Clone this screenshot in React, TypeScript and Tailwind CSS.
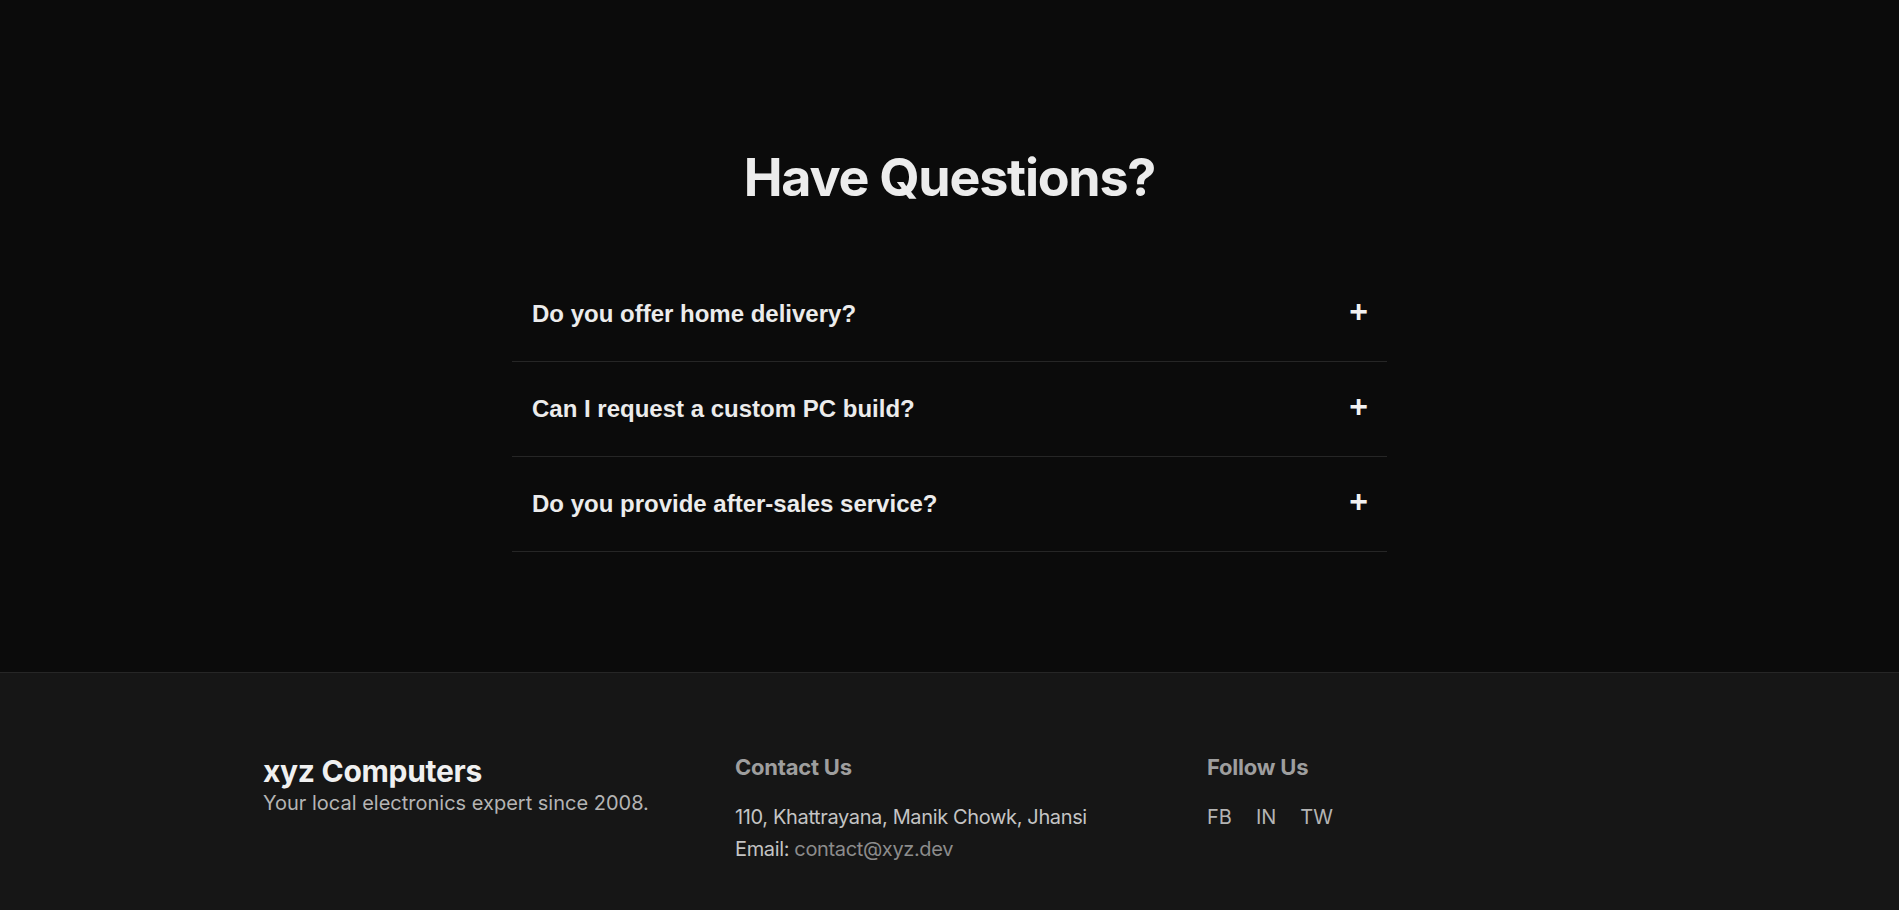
const faqs = [
  "Do you offer home delivery?",
  "Can I request a custom PC build?",
  "Do you provide after-sales service?",
]

export default function App() {
  return (
    <div className="min-h-screen bg-[#0b0b0b] font-['Inter',sans-serif]">
      <section className="pt-[152px] pb-[120px]">
        <h2 className="text-center text-[52px] leading-none font-bold text-[#ececec] tracking-[-0.024em]">
          Have Questions?
        </h2>
        <div className="mx-auto mt-[63px] w-[875px]">
          {faqs.map((q) => (
            <FaqRow key={q} question={q} />
          ))}
        </div>
      </section>
      <Footer />
    </div>
  )
}

function FaqRow({ question }: { question: string }) {
  return (
    <div className="flex flex-row items-start justify-between pl-5 pr-[19px] py-8 border-b border-[#262626] font-['Liberation_Sans',Arial,sans-serif]">
      <span className="text-2xl leading-[30px] font-bold text-[#ececec]">{question}</span>
      <span className="text-[32px] leading-[24px] font-bold text-[#f2f2f2]">+</span>
    </div>
  )
}

function Footer() {
  return (
    <footer className="bg-[#161616] border-t border-[#262626] pt-20 pb-20">
      <div className="mx-auto w-[1373px] grid grid-cols-3 gap-x-[43px]">
        <div className="flex flex-col">
          <span className="text-3xl leading-9 font-bold text-[#f0f0f0] tracking-[-0.01em]">xyz Computers</span>
          <span className="text-xl leading-7 text-[#b4b4b4]">Your local electronics expert since 2008.</span>
        </div>
        <div className="flex flex-col">
          <span className="text-[22px] leading-7 font-bold text-[#9e9e9e] tracking-[-0.01em]">Contact Us</span>
          <div className="mt-5 flex flex-col text-xl leading-8 text-[#c4c4c4] tracking-[-0.018em]">
            <span>110, Khattrayana, Manik Chowk, Jhansi</span>
            <span>
              Email: <a href="#" className="text-[#8c8c8c]">contact@xyz.dev</a>
            </span>
          </div>
        </div>
        <div className="flex flex-col">
          <span className="text-[22px] leading-7 font-bold text-[#9e9e9e] tracking-[-0.01em]">Follow Us</span>
          <div className="mt-5 flex flex-row gap-x-6 text-xl leading-8 text-[#b4b4b4]">
            <a href="#">FB</a>
            <a href="#">IN</a>
            <a href="#">TW</a>
          </div>
        </div>
      </div>
    </footer>
  )
}
